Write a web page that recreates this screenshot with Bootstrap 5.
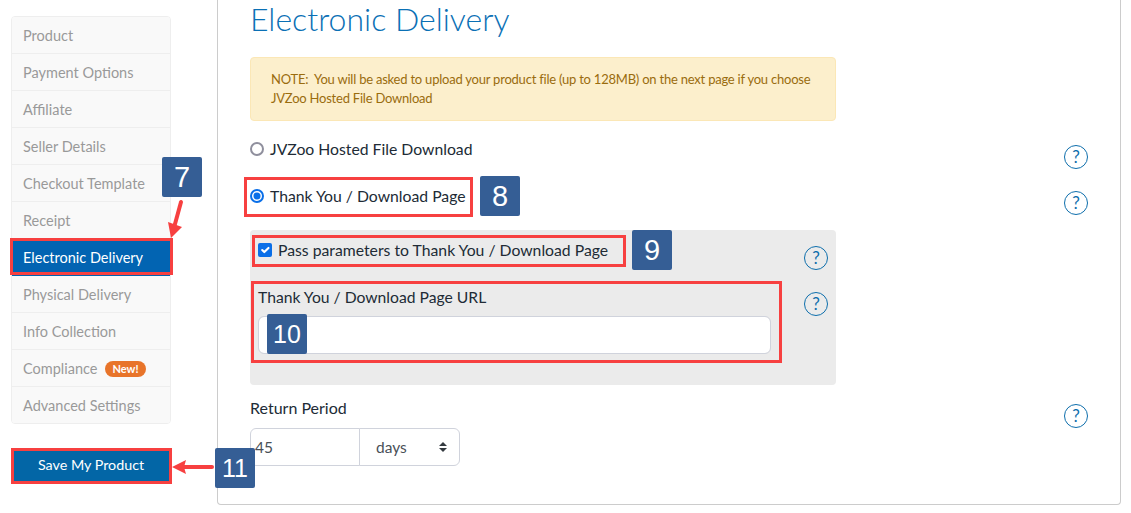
<!DOCTYPE html>
<html lang="en">
<head>
<meta charset="utf-8">
<title>Electronic Delivery</title>
<link href="https://cdn.jsdelivr.net/npm/bootstrap@5.3.0/dist/css/bootstrap.min.css" rel="stylesheet">
<style>
html,body{height:513px;overflow:hidden;background:#fff}
body{font-family:"Lato","Liberation Sans",sans-serif;font-size:15px;color:#212b36;position:relative}
.side-col{width:160px;margin:16px 46px 0 11px;flex:none}
.side-nav{border:1px solid #eee;border-radius:4px;overflow:hidden}
.side-link{display:flex;align-items:center;height:37px;padding:2px 11px 0;background:#f9f9f9;color:#999;font-size:14.5px;text-decoration:none;border-bottom:1px solid #eee}
.side-link:last-child{border-bottom:0;height:36px}
.side-link.current{background:#0264b2;color:#fff;border-color:#0264b2}
.new-pill{background:#e8742a;color:#fff;font-size:11px;font-weight:700;border-radius:9px;padding:1px 7px;line-height:14px;margin-left:8px}
.save-btn{width:160px;height:36px;margin-top:24px;padding:0 0 2px;background:#0366a6;color:#fff;font-size:14.3px;border:0;border-radius:2px}
.main-panel{width:904px;height:505px;flex:none;border:1px solid #ccc;border-top:0;border-radius:0 0 4px 4px;padding:0 32px}
.page-title{font-size:32px;font-weight:300;line-height:38px;color:#0a70b5;margin:0 0 19px}
.note-box{width:586px;height:64px;margin:0;padding:12px 20px;background:#fcefcc;border:1px solid #fbe7b6;border-radius:4px;color:#9a6c0e;font-size:13px;letter-spacing:-.22px;line-height:19px}
.opt-one{height:47px;margin-top:18px}
.opt-two{height:44px}
.sub-panel{width:586px;height:155px;background:#ebebeb;border-radius:4px;padding:10px 8px 0}
.sub-one{height:47px}
.line-text{line-height:20px;font-size:15.7px}
.line-wide{font-size:16px}
.opt-check{display:flex;align-items:center;gap:6px;margin:0;line-height:20px;font-size:15.75px;color:#212b36}
.opt-check .form-check-input{width:14px;height:14px;margin:0;flex:none;border:2px solid #8f8f9d}
.opt-check .form-check-input[type=radio]:checked{border-color:#0a6fe8;background-color:#fff;background-size:14px 14px;background-position:center;background-origin:border-box;background-image:url("data:image/svg+xml,%3csvg xmlns='http://www.w3.org/2000/svg' viewBox='0 0 14 14'%3e%3ccircle cx='7' cy='7' r='3.5' fill='%230a6fe8'/%3e%3c/svg%3e")}
.opt-check .form-check-input[type=checkbox]:checked{border:0;border-radius:2px;background-color:#0a6fe8;background-size:14px 14px}
.help-dot{width:24px;height:24px;flex:none;border:1.5px solid #0d6eac;border-radius:50%;color:#0d6eac;font-size:17px;font-weight:400;line-height:21px;text-align:center;margin-top:6px}
.help-up{margin-top:5px}
.url-col{width:513px}
.url-input{height:38px;margin-top:9px;border-color:#d0d3dc}
.ret-row{margin-top:13px}
.ret-group{width:210px;margin-top:10px}
.ret-input{flex:none!important;width:110px!important;height:38px;padding:0 4px;color:#495057;font-size:15.5px;border-color:#d0d3dc}
.ret-select{flex:none!important;width:101px!important;height:38px;padding:1px 16px 0;color:#495057;font-size:15.5px;border-color:#d0d3dc;
background-image:url("data:image/svg+xml,%3csvg xmlns='http://www.w3.org/2000/svg' viewBox='0 0 4 5'%3e%3cpath fill='%23343a40' d='M2 0L0 2h4zm0 5L0 3h4z'/%3e%3c/svg%3e");background-size:8px 10px;background-position:right 12px center}
.tag-num{position:absolute;width:40px;height:40px;background:#355e95;color:#fff;border-radius:2px;font-family:"Liberation Sans",sans-serif;font-size:29px;line-height:40px;text-align:center}
.tag-pair{font-size:25px}
.red-frame{position:absolute;border:3px solid #f74040}
.arrow-mark{position:absolute;overflow:visible}
.t7{left:162px;top:157px}.t8{left:480px;top:176px}.t9{left:632px;top:230px}.t10{left:267px;top:314px}.t11{left:215px;top:448px}
.f-nav{left:10px;top:238px;width:163px;height:37px}
.f-save{left:11px;top:448px;width:161px;height:36px}
.f-radio{left:244px;top:177px;width:229px;height:40px}
.f-check{left:252px;top:235px;width:374px;height:32px}
.f-url{left:251px;top:281px;width:531px;height:82px}
.a7{left:165px;top:198px}
.a11{left:170px;top:458px}
</style>
</head>
<body>
<div class="d-flex">
  <aside class="side-col">
    <nav class="side-nav">
      <a class="side-link" href="#">Product</a>
      <a class="side-link" href="#">Payment Options</a>
      <a class="side-link" href="#">Affiliate</a>
      <a class="side-link" href="#">Seller Details</a>
      <a class="side-link" href="#">Checkout Template</a>
      <a class="side-link" href="#">Receipt</a>
      <a class="side-link current" href="#">Electronic Delivery</a>
      <a class="side-link" href="#">Physical Delivery</a>
      <a class="side-link" href="#">Info Collection</a>
      <a class="side-link" href="#">Compliance <span class="new-pill">New!</span></a>
      <a class="side-link" href="#">Advanced Settings</a>
    </nav>
    <button type="button" class="btn save-btn">Save My Product</button>
  </aside>
  <main class="main-panel">
    <h2 class="page-title">Electronic Delivery</h2>
    <p class="note-box">NOTE:&nbsp; You will be asked to upload your product file (up to 128MB) on the next page if you choose JVZoo Hosted File Download</p>
    <div class="opt-one d-flex justify-content-between align-items-start">
      <label class="opt-check"><input class="form-check-input" type="radio" name="dl">JVZoo Hosted File Download</label>
      <span class="help-dot">?</span>
    </div>
    <div class="opt-two d-flex justify-content-between align-items-start">
      <label class="opt-check"><input class="form-check-input" type="radio" name="dl" checked>Thank You / Download Page</label>
      <span class="help-dot help-up">?</span>
    </div>
    <section class="sub-panel">
      <div class="sub-one d-flex justify-content-between align-items-start">
        <label class="opt-check"><input class="form-check-input" type="checkbox" checked>Pass parameters to Thank You / Download Page</label>
        <span class="help-dot">?</span>
      </div>
      <div class="d-flex justify-content-between align-items-start">
        <div class="url-col">
          <div class="line-text">Thank You / Download Page URL</div>
          <input class="form-control url-input" type="text">
        </div>
        <span class="help-dot help-up">?</span>
      </div>
    </section>
    <div class="ret-row d-flex justify-content-between align-items-start">
      <div>
        <div class="line-text line-wide">Return Period</div>
        <div class="input-group ret-group">
          <input class="form-control ret-input" type="text" value="45">
          <select class="form-select ret-select"><option>days</option></select>
        </div>
      </div>
      <span class="help-dot">?</span>
    </div>
  </main>
</div>

<div class="red-frame f-nav"></div>
<div class="red-frame f-save"></div>
<div class="red-frame f-radio"></div>
<div class="red-frame f-check"></div>
<div class="red-frame f-url"></div>
<div class="tag-num t7">7</div>
<div class="tag-num t8">8</div>
<div class="tag-num t9">9</div>
<div class="tag-num tag-pair t10">10</div>
<div class="tag-num tag-pair t11">11</div>
<svg class="arrow-mark a7" width="20" height="40" viewBox="0 0 20 40"><path d="M16 4 L10 26" stroke="#f74040" stroke-width="4" stroke-linecap="round" fill="none"/><path d="M3 24 L17 29 L6 40 Z" fill="#f74040"/></svg>
<svg class="arrow-mark a11" width="45" height="18" viewBox="0 0 45 18"><path d="M12 9 H42" stroke="#f74040" stroke-width="4" stroke-linecap="round" fill="none"/><path d="M2 9 L16 2 L14 9 L16 16 Z" fill="#f74040"/></svg>
<script src="https://cdn.jsdelivr.net/npm/bootstrap@5.3.0/dist/js/bootstrap.bundle.min.js"></script>
</body>
</html>
